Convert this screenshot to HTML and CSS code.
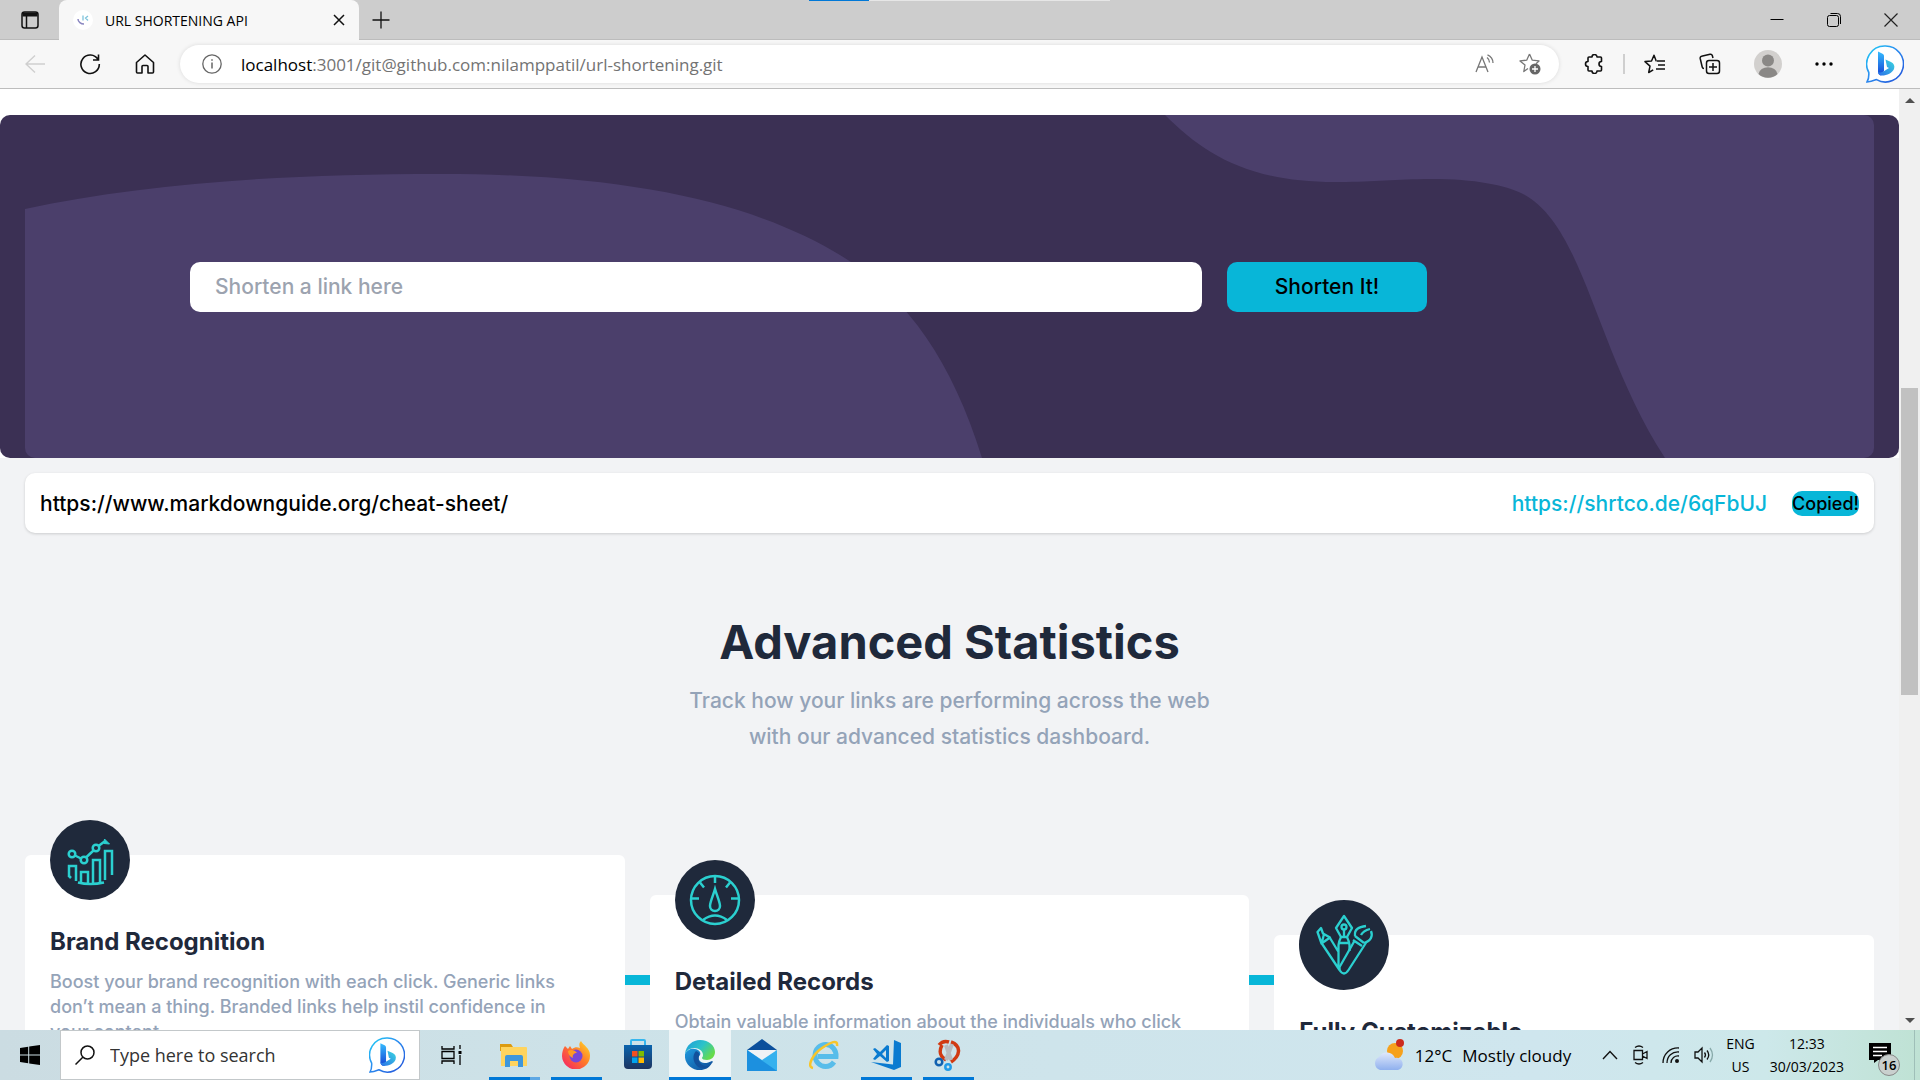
FILE: index.html
```html
<!DOCTYPE html>
<html lang="en">
<head>
<meta charset="utf-8">
<title>URL SHORTENING API</title>
<link rel="stylesheet" href="styles.css">
</head>
<body>
<svg class="defs" aria-hidden="true">
  <defs>
    <linearGradient id="bing-ring" x1="0" y1="0" x2="1" y2="1"><stop offset="0" stop-color="#1fd0f5"/><stop offset=".45" stop-color="#2b8df0"/><stop offset="1" stop-color="#2350d8"/></linearGradient>
    <linearGradient id="bing-stem" x1="0" y1="0" x2="0" y2="1"><stop offset="0" stop-color="#37bdff"/><stop offset="1" stop-color="#1442d4"/></linearGradient>
    <linearGradient id="bing-bowl" x1="1" y1="0" x2="0" y2="1"><stop offset="0" stop-color="#3bd8e0"/><stop offset="1" stop-color="#2a6fe8"/></linearGradient>
    <symbol id="bing" viewBox="0 0 38 38">
      <path d="M19 1a18 18 0 1 1-8.500 33.600C7 36 4 37 1 37c2-3 2-6 1.800-9.500A18 18 0 0 1 19 1z" fill="#fff" stroke="url(#bing-ring)" stroke-width="1.600"/>
      <path d="M12 6.500l4.500 2.200c1 .6 1.500 1.400 1.500 2.600V26l-3 4.500c-2-.5-3-2-3-4z" fill="url(#bing-stem)"/>
      <path d="M19.500 14.500l5.500 2.500c3 1.500 4 4 3 7-1.500 4-8 7-13 6.500-2-.3-3-2-3-4 1 1.500 3 1.200 5 .2l6-3.700-2-1z" fill="url(#bing-bowl)"/>
    </symbol>
  </defs>
</svg>

<header class="browser">
  <div class="tabstrip">
    <span class="progress"></span>
    <button class="icon-btn tab-menu" aria-label="Tab actions"><svg width="18" height="18" viewBox="0 0 18 18" fill="none" stroke="#111" stroke-width="1.500"><rect x="1" y="1" width="16" height="16" rx="2.500"/><path d="M1.500 3.500h15" stroke-width="4"/><path d="M5.500 5v12"/></svg></button>
    <div class="tab">
      <svg class="favicon" width="20" height="20" viewBox="0 0 20 20" fill="none"><circle cx="10" cy="10" r="10" fill="#fff"/><path d="M5 9c0 3 3 5 6 5" stroke="#8a86c0" stroke-width="1.500"/><path d="M10 5.500v5M15 6l-2.500 2L15 10.500" stroke="#7fc4dc" stroke-width="1.300"/></svg>
      <span class="tab-title">URL SHORTENING API</span>
      <button class="icon-btn" aria-label="Close tab"><svg width="12" height="12" viewBox="0 0 12 12" stroke="#111" stroke-width="1.500"><path d="M1 1l10 10M11 1L1 11"/></svg></button>
    </div>
    <button class="icon-btn new-tab" aria-label="New tab"><svg width="18" height="18" viewBox="0 0 18 18" stroke="#111" stroke-width="1.300"><path d="M9 .5v17M.5 9h17"/></svg></button>
    <div class="window-controls">
      <button class="icon-btn" aria-label="Minimize"><svg width="14" height="14" viewBox="0 0 14 14" stroke="#000"><path d="M.5 6.500h13"/></svg></button>
      <button class="icon-btn" aria-label="Restore"><svg width="14" height="14" viewBox="0 0 14 14" fill="none" stroke="#000"><rect x=".5" y="2.500" width="11" height="11" rx="2"/><path d="M3.500.5h7a3 3 0 0 1 3 3v7.500"/></svg></button>
      <button class="icon-btn" aria-label="Close"><svg width="14" height="14" viewBox="0 0 14 14" stroke="#222" stroke-width="1.200"><path d="M.5.5l13 13M13.500.5l-13 13"/></svg></button>
    </div>
  </div>
  <div class="toolbar">
    <nav class="nav-buttons" aria-label="Browser navigation">
      <button class="icon-btn" aria-label="Back" disabled><svg width="20" height="20" viewBox="0 0 20 20" fill="none" stroke="#cfcfcf" stroke-width="1.400"><path d="M20 10H1M10 1.500L1 10l9 8.500"/></svg></button>
      <button class="icon-btn" aria-label="Refresh"><svg width="22" height="22" viewBox="0 0 22 22" fill="none" stroke="#111" stroke-width="1.600"><path d="M19 6.500A9.200 9.200 0 1 0 20.300 11M19.500 1.500v5.500H14"/></svg></button>
      <button class="icon-btn" aria-label="Home"><svg width="20" height="20" viewBox="0 0 20 20" fill="none" stroke="#111" stroke-width="1.600" stroke-linejoin="round"><path d="M1.500 8.500L10 1l8.500 7.500V18a1 1 0 0 1-1 1H13v-6.500a1 1 0 0 0-1-1H8a1 1 0 0 0-1 1V19H2.500a1 1 0 0 1-1-1z"/></svg></button>
    </nav>
    <div class="address">
      <svg width="20" height="20" viewBox="0 0 20 20" fill="none" stroke="#666" stroke-width="1.300"><circle cx="10" cy="10" r="9.200"/><path d="M10 8.500v6M10 5.200v1.600" stroke-width="1.500"/></svg>
      <div class="url" role="textbox" aria-label="Address" contenteditable="true" spellcheck="false"><span class="url-host">localhost</span>:3001/git@github.com:nilamppatil/url-shortening.git</div>
      <button class="icon-btn" aria-label="Read aloud"><svg width="20" height="20" viewBox="0 0 20 20" fill="none" stroke="#777" stroke-width="1.300"><path d="M1 18L7 3l6 15M3 13h8M12 3.500a6 6 0 0 1 2.500 5M12.500.8A9 9 0 0 1 18 9"/></svg></button>
      <button class="icon-btn" aria-label="Add to favorites"><svg width="22" height="22" viewBox="0 0 22 22" fill="none" stroke="#777" stroke-width="1.300" stroke-linejoin="round"><path d="M10.500 1l2.800 6.200 6.700.7-3 2.800M9 15.500L4.800 18.500 6 12 1 7.900l6.700-.7L10.500 1"/><circle cx="16" cy="16" r="5.500" fill="#666" stroke="none"/><path d="M16 13v6M13 16h6" stroke="#fff"/></svg></button>
    </div>
    <div class="toolbar-actions">
      <button class="icon-btn" aria-label="Extensions"><svg width="20" height="20" viewBox="0 0 20 20" fill="none" stroke="#111" stroke-width="1.600" stroke-linejoin="round"><path d="M5 3h3a2.500 2.500 0 0 1 5 0h3.500a1 1 0 0 1 1 1v3.500a2.500 2.500 0 0 0 0 5V16a1 1 0 0 1-1 1H13a2.500 2.500 0 0 1-5 0H5a1 1 0 0 1-1-1v-3.500a2.500 2.500 0 0 1 0-5V4a1 1 0 0 1 1-1z"/></svg></button>
      <span class="divider"></span>
      <button class="icon-btn" aria-label="Favorites"><svg width="22" height="20" viewBox="0 0 22 20" fill="none" stroke="#111" stroke-width="1.500" stroke-linejoin="round"><path d="M12.500 7h-.3L10 1.200 7.500 7 1 7.600l5 4.500L4.700 18.500l4.500-2.700M13 7h8M14 11h7M12 15h9"/></svg></button>
      <button class="icon-btn" aria-label="Collections"><svg width="22" height="22" viewBox="0 0 22 22" fill="none" stroke="#111" stroke-width="1.500"><rect x="7.500" y="7.500" width="13" height="13" rx="2.500"/><path d="M14 10v8M10 14h8M5 15.500c-1 0-1.600-.6-1.800-1.500L1.200 5.500C1 4.500 1.500 3.500 2.500 3.300L11 1.200c1-.2 2 .3 2.300 1.300l.7 2.500"/></svg></button>
      <button class="icon-btn" aria-label="Profile"><svg width="28" height="28" viewBox="0 0 28 28"><circle cx="14" cy="14" r="14" fill="#d2d0ce"/><circle cx="14" cy="10.500" r="6" fill="#8a8886"/><path d="M4.500 24a9.600 8 0 0 1 19 0 14 14 0 0 1-19 0z" fill="#8a8886"/></svg></button>
      <button class="icon-btn" aria-label="Settings and more"><svg width="18" height="4" viewBox="0 0 18 4"><circle cx="2" cy="2" r="1.700"/><circle cx="9" cy="2" r="1.700"/><circle cx="16" cy="2" r="1.700"/></svg></button>
      <button class="icon-btn" aria-label="Bing chat"><svg width="38" height="38"><use href="#bing"/></svg></button>
    </div>
  </div>
</header>

<div class="viewport">
  <main class="page">
    <section class="hero">
      <svg class="hero-shapes" viewBox="0 0 1849 343" preserveAspectRatio="none" aria-hidden="true"><path d="M0 94C120 68 260 59 416 59C610 59 740 90 826 147C882 185 927 245 957 343H0zM1140 0C1180 40 1225 68 1315 67C1350 67 1370 64 1406 64C1450 64 1480 70 1498 79C1560 112 1570 235 1640 343H1849V0z" fill="#4b3f6b"/></svg>
      <form class="shorten">
        <input class="shorten-input" type="text" placeholder="Shorten a link here" aria-label="Link to shorten">
        <button class="shorten-btn" type="button">Shorten It!</button>
      </form>
    </section>
    <section class="content">
      <article class="result">
        <p class="result-source">https://www.markdownguide.org/cheat-sheet/</p>
        <a class="result-link" href="https://shrtco.de/6qFbUJ">https://shrtco.de/6qFbUJ</a>
        <button class="copy-btn" type="button">Copied!</button>
      </article>
      <div class="intro">
        <h2>Advanced Statistics</h2>
        <p>Track how your links are performing across the web<br>with our advanced statistics dashboard.</p>
      </div>
      <div class="cards">
        <article class="card">
          <svg class="card-icon" width="80" height="80" viewBox="0 0 80 80" fill="none" stroke="#2bd0d0" stroke-width="2.500"><circle cx="40" cy="40" r="40" fill="#1f293b" stroke="none"/><path d="M19 57V46h7v15M31 62V52h7v11M43 63V40h7v22M55 60V31h7v24M19 56l2 2M28 62.500q12 3 26 0"/><circle cx="22" cy="34" r="3.300"/><circle cx="34" cy="40" r="3.300"/><circle cx="46" cy="28" r="3.300"/><path d="M25 35.500l6 3M36 37.500l7.500-7M48.500 26l6-4.500"/><path d="M54.500 19l5 5-5.500-.5z" fill="#2bd0d0" stroke-width="1"/></svg>
          <h3>Brand Recognition</h3>
          <p>Boost your brand recognition with each click. Generic links<br>don’t mean a thing. Branded links help instil confidence in<br>your content.</p>
        </article>
        <span class="connector"></span>
        <article class="card card-second">
          <svg class="card-icon" width="80" height="80" viewBox="0 0 80 80" fill="none" stroke="#2bd0d0" stroke-width="2.500"><circle cx="40" cy="40" r="40" fill="#1f293b" stroke="none"/><circle cx="40" cy="40" r="24"/><path d="M40 16v7M16 38.500h8M56 38.500h8M25 22.500l4 5M55 22.500l-4 5M28 60q12-9 24 0"/><path d="M40 29c-2 7-5 13-5 17a5 5 0 0 0 10 0c0-4-3-10-5-17z"/></svg>
          <h3>Detailed Records</h3>
          <p>Obtain valuable information about the individuals who click</p>
        </article>
        <span class="connector"></span>
        <article class="card card-third">
          <svg class="card-icon" width="90" height="90" viewBox="0 0 90 90" fill="none" stroke="#2bd0d0" stroke-width="2.300" stroke-linejoin="round"><circle cx="45" cy="45" r="45" fill="#1f293b" stroke="none"/><path d="M45 16l-8 12 5 9h6l5-9zM45 30v6"/><circle cx="45" cy="27" r="2.500"/><path d="M42 37q-2 4-2.500 8v21l1.500 4M48 37q2 4 2.500 8v6M39.500 43h11M18.500 32l3.500-4 2 5.500 7 4-8.500 6zM22.500 43l18 27M31 38l8.500 14M23 42l2-8"/><path d="M40.500 70q4.500 7 9 0l18-28M40 68l16-28M54 40l9 6M56 36l9 7M56 36c-1-7 4-9 11-10M65 43c7-2 9-7 7-12M62 35c2-4 5-5 9-6"/></svg>
          <h3>Fully Customizable</h3>
        </article>
      </div>
    </section>
  </main>
  <div class="scrollbar" aria-hidden="true"><span class="arrow-up"></span><span class="thumb"></span><span class="arrow-down"></span></div>
</div>

<footer class="taskbar">
  <button class="start" aria-label="Start"><svg width="20" height="20" viewBox="0 0 20 20"><path d="M0 3l8.200-1.200v7.700H0zM9.200 1.600L20 0v9.500H9.200zM0 10.500h8.200v7.700L0 17zM9.200 10.500H20V20L9.200 18.400z"/></svg></button>
  <div class="search">
    <svg width="20" height="20" viewBox="0 0 20 20" fill="none" stroke="#111" stroke-width="1.500"><circle cx="12.500" cy="7.500" r="6.500"/><path d="M8 12L.5 19.500"/></svg>
    <input class="search-input" type="text" placeholder="Type here to search" aria-label="Search">
    <svg width="36" height="36"><use href="#bing"/></svg>
  </div>
  <nav class="apps" aria-label="Taskbar">
    <button class="app" aria-label="Task view"><svg width="22" height="20" viewBox="0 0 22 20" fill="none" stroke="#000" stroke-width="1.300"><path d="M1 1v3h12V1M1 19v-3h12v3M1 6.500h12v7H1zM19 0v4M19 10v10"/><path d="M17.500 6h3v3h-3z" fill="#000" stroke="none"/></svg></button>
    <button class="app app-open app-multi" aria-label="File Explorer"><svg width="28" height="24" viewBox="0 0 28 24"><path d="M0 1h11l2 3v4H0z" fill="#dd9b10"/><path d="M1 4h25a1 1 0 0 1 1 1v18H1z" fill="#ffd45e"/><path d="M5 24V14a2 2 0 0 1 2-2h14a2 2 0 0 1 2 2v10h-5v-6h-8v6z" fill="#3f97dc"/></svg></button>
    <button class="app app-open" aria-label="Firefox"><svg width="28" height="28" viewBox="0 0 28 28"><defs><linearGradient id="fx" x1="1" y1="0" x2="0" y2="1"><stop offset="0" stop-color="#ffe227"/><stop offset=".45" stop-color="#ff7a29"/><stop offset="1" stop-color="#f3186d"/></linearGradient></defs><path d="M3 5l3 3 2-3 2 3c3-2 5-2 8-1-1-3-1-5 1-7 2 4 9 7 9 14a14 14 0 0 1-28 1C0 11 1 8 3 5z" fill="url(#fx)"/><circle cx="14" cy="15" r="6.500" fill="#7847d8"/><path d="M6 10c3-2 7-1 9 2-3 0-5 2-4 5-3-1-5-4-5-7z" fill="#ff9b26"/></svg></button>
    <button class="app" aria-label="Microsoft Store"><svg width="28" height="34" viewBox="0 0 28 34"><defs><linearGradient id="st" x1="0" y1="0" x2="0" y2="1"><stop offset="0" stop-color="#0a64ae"/><stop offset="1" stop-color="#1c3460"/></linearGradient></defs><path d="M7 7V3a1 1 0 0 1 1-1h12a1 1 0 0 1 1 1v4" fill="none" stroke="#35b6ee" stroke-width="2"/><path d="M0 7h28v20a4 4 0 0 1-4 4H4a4 4 0 0 1-4-4z" fill="url(#st)"/><path d="M8 13h5.500v5.500H8z" fill="#f25022"/><path d="M14.500 13H20v5.500h-5.500z" fill="#7fba00"/><path d="M8 19.500h5.500V25H8z" fill="#00a4ef"/><path d="M14.500 19.500H20V25h-5.500z" fill="#ffb900"/></svg></button>
    <button class="app app-open app-active" aria-label="Microsoft Edge"><svg width="30" height="30" viewBox="0 0 30 30"><defs><linearGradient id="eg" x1="0" y1="0" x2="1" y2=".6"><stop offset="0" stop-color="#1e9ade"/><stop offset=".55" stop-color="#2cc3c8"/><stop offset="1" stop-color="#66dc4a"/></linearGradient><linearGradient id="eb" x1="0" y1="0" x2="1" y2="1"><stop offset="0" stop-color="#1f9be0"/><stop offset="1" stop-color="#0f4a96"/></linearGradient></defs><path d="M0 14C1 5 8 0 15 0c9 0 15 6 15 12 0 5-4 8-8 8-3 0-5-1-5-2 0-1 1-1 1-3 0-4-4-7-9-7-4 0-7 2-9 6z" fill="url(#eg)"/><path d="M0 14c2-4 6-6 10-5 5 1 6 4 5 6-2 2-2 5 1 7 3 2 7 1 11-1 1 0 1 1 0 2-3 5-7 7-12 7C6 30-1 23 0 14z" fill="url(#eb)"/><path d="M11 11c-4 4-3 11 1 15 3 3 8 3 12 0-7 1-12-4-10-10 1-2 0-4-3-5z" fill="#12519c"/></svg></button>
    <button class="app" aria-label="Mail"><svg width="30" height="34" viewBox="0 0 30 34"><path d="M0 12L15 1l15 11z" fill="#0b4f9c"/><path d="M2 12h26v14H2z" fill="#f0f2f5"/><path d="M0 12l15 10 15-10v21H0z" fill="#35b1ee"/><path d="M0 33V12l30 21z" fill="#1c90df"/></svg></button>
    <button class="app" aria-label="Internet Explorer"><svg width="30" height="30" viewBox="0 0 30 30" fill="none"><path d="M25 22c-2 3-5 4.500-8.500 4.500a10.500 11 0 1 1 10.500-10H9" stroke="#58bdea" stroke-width="5"/><path d="M4 28c-7-1 0-14 9-20S29-1 28 6" stroke="#f7c52b" stroke-width="2.500"/></svg></button>
    <button class="app app-open" aria-label="Visual Studio Code"><svg width="30" height="30" viewBox="0 0 30 30" fill="#0a7bd0"><path d="M23 0l7 3v24l-7 3L0 22l22 2.500z"/><path fill-rule="evenodd" d="M16 5l2 1v15l-2 1-7-6-5 4-2-1 4-5-4-5 2-1 5 4zM15 10l-4 4 4 4z"/></svg></button>
    <button class="app app-open" aria-label="Snipping Tool"><svg width="28" height="32" viewBox="0 0 28 32" fill="none"><path d="M5 6Q9 1 15 3M17 3c11 4 9 14 0 20M8 6c-4 8-1 12 4 15" stroke="#d13a12" stroke-width="3.500"/><path d="M12 6l5 15M18 5l-6 16" stroke="#b8bcc0" stroke-width="4"/><circle cx="5" cy="23" r="3.300" stroke="#1261b0" stroke-width="2.500"/><circle cx="14" cy="28" r="2.700" stroke="#229be8" stroke-width="2.500"/></svg></button>
  </nav>
  <div class="tray">
    <button class="weather"><svg width="32" height="34" viewBox="0 0 32 34"><defs><linearGradient id="cl" x1="0" y1="0" x2="0" y2="1"><stop offset="0" stop-color="#dfe8fb"/><stop offset="1" stop-color="#8fb0ee"/></linearGradient></defs><circle cx="22" cy="13" r="8" fill="#f6a11c"/><path d="M7 32a7 7 0 0 1-1-13 9 9 0 0 1 16 1 6 6 0 0 1 3 12z" fill="url(#cl)"/><circle cx="27" cy="5" r="4" fill="#cc2b1d"/></svg><span>12°C</span><span>Mostly cloudy</span></button>
    <div class="tray-icons">
      <button class="icon-btn" aria-label="Show hidden icons"><svg width="16" height="10" viewBox="0 0 16 10" fill="none" stroke="#111" stroke-width="1.400"><path d="M1 9l7-7.500L15 9"/></svg></button>
      <button class="icon-btn" aria-label="Meet now"><svg width="16" height="20" viewBox="0 0 16 20" fill="none" stroke="#111" stroke-width="1.300"><path d="M2 5.500h8.500v9H2zM10.500 9L15 6.500v7L10.500 11M3 2.500q4-3 8 0M3 17.500q4 3 8 0"/></svg></button>
      <button class="icon-btn" aria-label="Network"><svg width="18" height="18" viewBox="0 0 18 18" fill="none" stroke="#111" stroke-width="1.300"><path d="M1 17C1 8 8 1.500 17 2M5 17C5 10 10 5.500 17 6M9 17c0-5 4-7.500 8-7"/><circle cx="15" cy="15" r="2" fill="#111" stroke="none"/></svg></button>
      <button class="icon-btn" aria-label="Volume"><svg width="20" height="18" viewBox="0 0 20 18" fill="none" stroke="#111" stroke-width="1.300"><path d="M1 6h3l4-4v14l-4-4H1zM10.500 6.500q2 2.500 0 5M13 4.500q3.500 4.500 0 9"/><path d="M16 2q5 7 0 14" stroke="#8aa"/></svg></button>
    </div>
    <button class="tray-text">ENG<br>US</button>
    <button class="tray-text tray-clock">12:33<br>30/03/2023</button>
    <button class="notifications" aria-label="16 notifications"><svg width="22" height="20" viewBox="0 0 22 20"><path d="M0 0h22v17H9l-4 3v-3H0z"/><path d="M4 4.500h14M4 8.500h14M4 12.500h9" stroke="#fff" stroke-width="1.500"/></svg><span class="badge">16</span></button>
  </div>
</footer>
</body>
</html>
```
FILE: styles.css
```css
* { box-sizing: border-box; }

body {
  margin: 0;
  height: 100vh;
  display: flex;
  flex-direction: column;
  overflow: hidden;
  font-family: "Open Sans", "Noto Sans", sans-serif;
  color: #000;
}

button, input { font: inherit; color: inherit; border: 0; padding: 0; background: none; }
button { cursor: pointer; }
svg { display: block; flex: none; }
h2, h3, p { margin: 0; }
.defs { position: absolute; width: 0; height: 0; }
.icon-btn { display: flex; align-items: center; justify-content: center; flex: none; }

/* Browser frame */
.browser { flex: none; }
.tabstrip {
  position: relative;
  display: flex;
  align-items: stretch;
  height: 40px;
  background: #cdcdcd;
  box-shadow: inset 0 -1px #bcbcbc;
}
.progress {
  position: absolute;
  top: 0;
  left: 809px;
  width: 301px;
  height: 1px;
  background: linear-gradient(90deg, #0078d7 60px, #e6e6e6 60px);
}
.tab-menu { width: 59px; }
.tab {
  display: flex;
  align-items: center;
  width: 300px;
  padding: 0 14px;
  gap: 12px;
  background: #f7f7f7;
  border-radius: 8px 8px 0 0;
}
.tab-title { flex: 1; font-size: 14px; white-space: nowrap; }
.new-tab { width: 44px; }
.window-controls { display: flex; margin-left: auto; padding-right: 1px; }
.window-controls .icon-btn { width: 57px; }

.toolbar {
  display: flex;
  align-items: center;
  height: 49px;
  background: #f7f7f7;
  border-bottom: 1px solid #bdbdbd;
}
.nav-buttons { display: flex; width: 180px; padding-left: 7px; }
.nav-buttons .icon-btn { width: 55px; height: 40px; }
.address {
  flex: 1;
  display: flex;
  align-items: center;
  gap: 24px;
  height: 38px;
  padding: 0 18px 0 22px;
  border-radius: 19px;
  background: #fff;
  box-shadow: 0 0 4px rgba(0, 0, 0, .12);
}
.url { flex: 1; margin-left: -5px; font-size: 17px; color: #737373; white-space: nowrap; outline: 0; }
.url-host { color: #000; }
.toolbar-actions { display: flex; align-items: center; gap: 33px; padding: 0 16px 0 25px; }
.divider { width: 2px; height: 20px; margin: 0 -14px; background: #cfcfcf; }

/* Web page */
.viewport { flex: 1; min-height: 0; display: flex; overflow: hidden; }
.page {
  flex: 1;
  min-width: 0;
  display: flex;
  flex-direction: column;
  padding-top: 26px;
  font-family: Inter, "Open Sans", sans-serif;
  font-weight: 500;
  background: #fff;
}
.hero {
  flex: none;
  display: grid;
  align-items: center;
  padding: 0 25px;
  border-radius: 10px;
  background: #3b3054;
}
.hero-shapes { grid-area: 1 / 1; width: 100%; height: 343px; border-radius: 10px; }
.shorten {
  grid-area: 1 / 1;
  z-index: 1;
  display: flex;
  gap: 25px;
  padding: 0 447px 0 165px;
}
.shorten-input {
  flex: 1;
  min-width: 0;
  height: 50px;
  padding: 0 25px;
  border-radius: 10px;
  background: #fff;
  font-size: 21px;
}
.shorten-input::placeholder { color: #9ca3af; opacity: 1; }
.shorten-btn { width: 200px; border-radius: 10px; background: #08b6d8; font-size: 21px; }

.content { flex: 1; display: flex; flex-direction: column; padding: 15px 25px 0; background: #f2f3f5; }
.result {
  display: flex;
  align-items: center;
  gap: 25px;
  height: 60px;
  padding: 0 15px;
  border-radius: 10px;
  background: #fff;
  box-shadow: 0 1px 3px rgba(0, 0, 0, .16);
  font-size: 21px;
}
.result-source { flex: 1; }
.result-link { color: #08b6d8; text-decoration: none; }
.copy-btn { height: 25px; border-radius: 10px; background: #08b6d8; font-size: 18px; line-height: 25px; }

.intro { margin-top: 84px; text-align: center; }
.intro h2 { font-size: 47px; line-height: 50px; font-weight: 700; color: #1f293b; }
.intro p { margin-top: 16px; font-size: 21px; line-height: 36px; color: #94a3b8; }

.cards { flex: 1; display: grid; grid-template-columns: 1fr 25px 1fr 25px 1fr; margin-top: 100px; }
.card { padding: 0 25px; border-radius: 6px 6px 0 0; background: #fff; white-space: nowrap; }
.card-second { margin-top: 40px; }
.card-third { margin-top: 80px; }
.card-icon { margin-top: -35px; }
.card h3 { margin-top: 25px; font-size: 24px; line-height: 34px; font-weight: 700; color: #1f293b; }
.card p { margin-top: 10px; font-size: 18px; line-height: 25px; color: #94a3b8; }
.connector { height: 10px; margin-top: 120px; background: #08b6d8; }

.scrollbar {
  display: flex;
  flex-direction: column;
  align-items: center;
  width: 21px;
  padding: 9px 0 7px;
  background: #f0f0f0;
}
.arrow-up, .arrow-down { border: 5px solid transparent; border-top-width: 0; border-bottom: 5px solid #505050; }
.arrow-down { margin-top: auto; transform: rotate(180deg); }
.thumb { width: 17px; height: 307px; margin-top: 285px; background: #c1c1c1; }

/* Taskbar */
.taskbar {
  flex: none;
  display: flex;
  height: 50px;
  background: linear-gradient(90deg, #cbdce2, #cde2e8 30%, #cfe6ee 80%, #cde8ea 92%, #bfe2d4);
}
.start { display: flex; align-items: center; justify-content: center; width: 60px; }
.search {
  display: flex;
  align-items: center;
  gap: 15px;
  width: 360px;
  padding: 0 14px;
  border: 1px solid #c3c8ca;
  background: #fff;
}
.search-input { flex: 1; min-width: 0; font-size: 18px; }
.search-input::placeholder { color: #333; opacity: 1; }
.apps { display: flex; padding-left: 1px; }
.app { display: flex; align-items: center; justify-content: center; width: 62px; }
.app-open { background: linear-gradient(#0078d7, #0078d7) center bottom / 51px 3px no-repeat; }
.app-multi { background-image: linear-gradient(90deg, #0078d7 41px, #5ea8e4 41px); }
.app-active { background-color: rgba(255, 255, 255, .65); background-size: 100% 3px; }

.tray { display: flex; align-items: center; margin-left: auto; padding-right: 5px; }
.weather { display: flex; align-items: center; gap: 10px; font-size: 17px; white-space: nowrap; }
.tray-icons { display: flex; align-items: center; gap: 14px; margin: 0 12px 0 31px; }
.tray-text { font-size: 14px; line-height: 23px; white-space: nowrap; }
.tray-clock { margin-left: 15px; }
.notifications {
  position: relative;
  display: flex;
  align-items: center;
  height: 50px;
  width: 46px;
  margin-left: 25px;
  padding-bottom: 4px;
  border-right: 1px solid #9fbfb8;
}
.badge {
  position: absolute;
  left: 9px;
  top: 24px;
  width: 22px;
  height: 22px;
  border: 1px solid #888;
  border-radius: 50%;
  background: #c9d0ce;
  font-size: 13px;
  font-weight: 600;
  line-height: 20px;
  text-align: center;
}
```
